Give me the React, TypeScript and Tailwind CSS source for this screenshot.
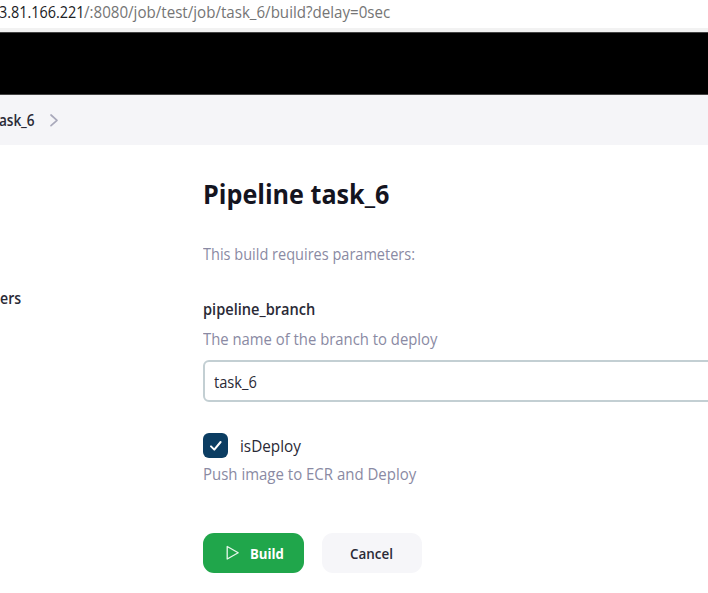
import React from 'react';

function Check() {
  return (
    <svg className="block" width="25" height="25" viewBox="0 0 25 25" fill="none">
      <path d="M8 13.4 L11.3 16.6 L17.6 9" stroke="#fff" strokeWidth="2" strokeLinecap="round" strokeLinejoin="round" />
    </svg>
  );
}

export default function App() {
  return (
    <div className="h-[593px] w-[708px] overflow-hidden whitespace-nowrap bg-white font-['Open_Sans','Noto_Sans',sans-serif] text-[#2a2a36]">
      <div className="flex h-7 items-start text-[16px] leading-6 text-[#757575]">
        <span className="-ml-px w-[85px] shrink-0 origin-left scale-x-[0.9] text-[#202124]">3.81.166.221</span>
        <span className="origin-left scale-x-[0.944]">/:8080/job/test/job/task_6/build?delay=0sec</span>
      </div>
      <div className="h-1 bg-[#f2f2f2]" />
      <header className="h-[63px] border-y border-[#444] bg-black" />
      <nav className="flex h-[50px] items-center bg-[#f5f5f8]">
        <span className="-ml-px w-[35px] origin-left scale-x-[0.88] text-[15.5px] font-semibold leading-6 tracking-[-0.1px]">ask_6</span>
        <svg className="ml-[15px]" width="10" height="14" viewBox="0 0 10 14" fill="none">
          <path d="M2 2 L8 7.3 L2 12.6" stroke="#a9a9bb" strokeWidth="1.7" strokeLinecap="round" strokeLinejoin="round" />
        </svg>
      </nav>
      <div className="flex">
        <aside className="w-[203px] shrink-0 pt-[141px]">
          <span className="block origin-left scale-x-[0.91] text-[15.5px] font-semibold leading-6">ers</span>
        </aside>
        <main className="w-[505px] shrink-0 pt-[29px]">
          <h1 className="h-10 text-[26.5px] font-bold leading-10 text-[#14141f]">
            <span className="inline-block origin-left scale-x-[0.949]">Pipeline task_6</span>
          </h1>
          <p className="mt-[28px] text-[16px] leading-6 text-[#8a8aa3]"><span className="inline-block origin-left scale-x-[0.908]">This build requires parameters:</span></p>
          <p className="mt-[31px] text-[16px] font-semibold leading-6"><span className="inline-block origin-left scale-x-[0.912]">pipeline_branch</span></p>
          <p className="mt-[6px] text-[16px] leading-6 text-[#8a8aa3]"><span className="inline-block origin-left scale-x-[0.928]">The name of the branch to deploy</span></p>
          <div className="mt-[9px] flex h-[42px] w-[540px] items-center rounded-[6px] border-2 border-[#c3cfd3] pl-[9px] pt-[2px] text-[16px]">
            <span className="origin-left scale-x-[0.915]">task_6</span>
          </div>
          <div className="mt-[31px] flex h-[25px] items-center">
            <span className="h-[25px] w-[25px] rounded-[6px] bg-[#0b3d62]"><Check /></span>
            <span className="ml-3 origin-left scale-x-[0.955] text-[16px] font-medium leading-6">isDeploy</span>
          </div>
          <p className="mt-[4px] text-[16px] leading-6 text-[#8a8aa3]"><span className="inline-block origin-left scale-x-[0.936]">Push image to ECR and Deploy</span></p>
          <div className="mt-[47px] flex gap-[18px] text-[14px]">
            <button className="flex h-10 w-[101px] items-center rounded-[11px] bg-[#20a64b] pl-[22px] font-bold text-white">
              <svg width="15" height="16" viewBox="0 0 15 16" fill="none">
                <path d="M2.2 1.5 V14 L13.2 7.7 Z" stroke="#e8f7ec" strokeWidth="1.3" strokeLinejoin="round" />
              </svg>
              <span className="ml-[10px] origin-left scale-x-[0.94]">Build</span>
            </button>
            <button className="flex h-10 w-[100px] items-center justify-center rounded-[11px] bg-[#f6f6f9] font-semibold">
              <span className="-ml-[2px] scale-x-[0.96]">Cancel</span>
            </button>
          </div>
        </main>
      </div>
    </div>
  );
}
